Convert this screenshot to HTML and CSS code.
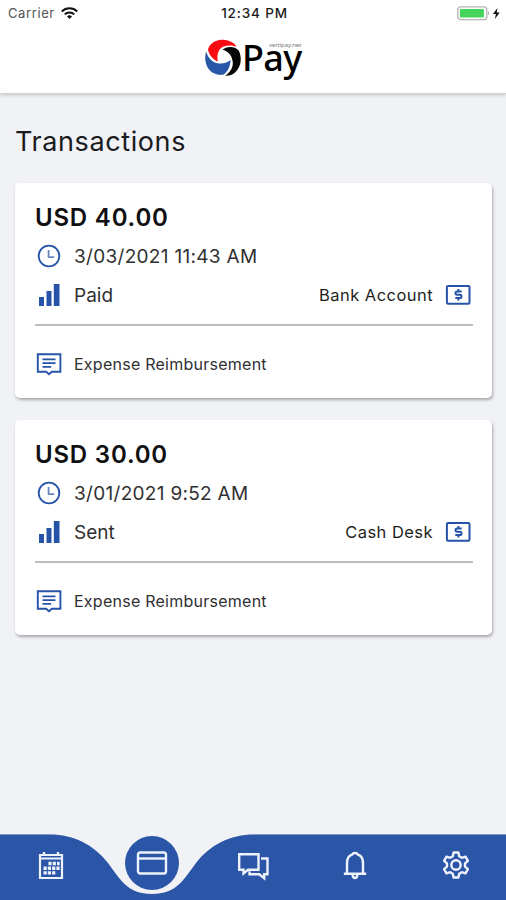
FILE: index.html
```html
<!DOCTYPE html>
<html lang="en">
<head>
<meta charset="utf-8">
<title>Pay – Transactions</title>
<link rel="stylesheet" href="styles.css">
</head>
<body>
<svg class="defs" width="0" height="0" aria-hidden="true">
  <symbol id="clock" viewBox="0 0 26 24"><g fill="none" stroke="currentColor"><circle cx="13" cy="12" r="10.3" stroke-width="1.8"/><path d="M12.6 6v7.2h5.6" stroke-width="1.8" opacity=".7"/></g></symbol>
  <symbol id="bars" viewBox="0 0 26 24"><path fill="currentColor" d="M3 14h5v9H3zM10.5 8h5v15h-5zM17.8 1H23.500v22h-5.700z"/></symbol>
  <symbol id="note" viewBox="0 0 26 24"><g fill="none" stroke="currentColor"><path d="M1.800 2.300h22.600v17.500h-8.600L13 22.200l-2.800-2.400H1.800z" stroke-width="1.900"/><path d="M6.500 7.400h13M6.500 11.100h13M6.500 14.800h8.600" stroke-width="1.700"/></g></symbol>
  <symbol id="cash" viewBox="0 0 26 22"><rect x="1.900" y="1.900" width="22.600" height="17.800" rx="1.200" fill="none" stroke="currentColor" stroke-width="2"/><path d="M16.700 7.500h-4.600q-1.600 0-1.600 1.600t1.600 1.600h2.800q1.600 0 1.600 1.700t-1.600 1.700h-4.600M13.400 5v2.300M13.400 14.200v2.200" fill="none" stroke="currentColor" stroke-width="2"/></symbol>
</svg>
<div class="screen">
  <header class="top">
    <div class="status">
      <div class="carrier"><span>Carrier</span>
        <svg width="17" height="12" viewBox="0 0 17 12"><g fill="none" stroke="#111" stroke-width="2"><path d="M.8 4.500a11 11 0 0 1 15.400 0"/><path d="M3.700 7.400a6.900 6.900 0 0 1 9.600 0"/></g><path d="M8.500 12L6 9.400a3.700 3.700 0 0 1 5 0z" fill="#111"/></svg>
      </div>
      <span class="time">12:34 PM</span>
      <svg class="battery" width="44" height="15" viewBox="0 0 44 15"><rect x=".8" y=".9" width="29" height="12.800" rx="3" fill="#fff" stroke="#b4b4b4" stroke-width="1.300"/><rect x="2.900" y="3" width="24" height="8.600" rx="1" fill="#46d55c"/><path d="M31 5q2 2.200 0 4.600z" fill="#aaa"/><path d="M40.500 2l-4.600 6h3l-1 5 4.800-6.400h-3z" fill="#111"/></svg>
    </div>
    <div class="brand">
      <svg width="38" height="40" viewBox="0 0 38 40">
        <path fill="#fa0b12" d="M4 11.500C6 4 14 .6 21 2c5 .7 9.500 3 11.500 6.500C29 7.300 24 6.800 19.500 8.500 14.500 11 12.500 16 13.800 23.500 9 21.500 5 17 4 11.500z"/>
        <path fill="#2857a7" d="M2.200 13.500C4 20.500 9 25.300 15.500 25.500c4 .2 8-.8 11-3.500C26.500 28 24 33 20 36.500 12 38 5 34 2.500 27 .8 22 .8 18 2.200 13.500z"/>
        <path fill="#050505" d="M18.500 11.500C24 8 30.500 8.200 34.700 12.500 38 19 37.500 28 32 33.500c-3 3.200-6.500 4.500-10.800 4.200C28 33 30 27 28.200 21.500 27.300 17 24 13.300 18.500 11.500z"/>
      </svg>
      <div class="word"><span class="pay">Pay</span><span class="site">vertipay.net</span></div>
    </div>
  </header>
  <main class="content">
    <h1>Transactions</h1>
    <article class="card">
      <h2>USD 40.00</h2>
      <div class="row date"><svg class="ico"><use href="#clock"/></svg><span>3/03/2021 11:43 AM</span></div>
      <div class="row state"><svg class="ico"><use href="#bars"/></svg><span class="label">Paid</span><span class="method">Bank Account</span><svg class="cash"><use href="#cash"/></svg></div>
      <div class="row memo"><svg class="ico"><use href="#note"/></svg><span>Expense Reimbursement</span></div>
    </article>
    <article class="card">
      <h2>USD 30.00</h2>
      <div class="row date"><svg class="ico"><use href="#clock"/></svg><span>3/01/2021 9:52 AM</span></div>
      <div class="row state"><svg class="ico"><use href="#bars"/></svg><span class="label">Sent</span><span class="method">Cash Desk</span><svg class="cash"><use href="#cash"/></svg></div>
      <div class="row memo"><svg class="ico"><use href="#note"/></svg><span>Expense Reimbursement</span></div>
    </article>
  </main>
  <nav class="tabs">
    <svg class="curve" width="506" height="67" viewBox="0 0 506 67"><path d="M0 1.500H50C74 1.500 94 12 108 30 120 46 127 61 152 61S184 46 196 30C210 12 230 1.500 254 1.500H506V67H0z" fill="#2b56a7"/><path d="M0 1.500H50M254 1.500H506" stroke="#7f99c9"/></svg>
    <a class="tab"><svg width="28" height="30" viewBox="0 0 28 30"><g fill="none" stroke="#edf2fb"><path d="M3 4h22v23H3z" stroke-width="2.200"/><path d="M7 1v4M21 1v4" stroke-width="2.400"/><path d="M3 7.500h22" stroke-width="2"/><path d="M11.400 12.500h11.200M6.500 17.200h16.100M6.500 21.900h11.800" stroke-width="3.400" stroke-dasharray="3.200 1.100"/></g></svg></a>
    <a class="tab active"><span class="bubble"><svg width="32" height="26" viewBox="0 0 32 26"><rect x="2" y="2.500" width="28" height="21" rx="2.300" fill="none" stroke="#edf2fb" stroke-width="2.400"/><path d="M3 8.500h26" stroke="#edf2fb" stroke-width="2.400"/></svg></span></a>
    <a class="tab"><svg width="34" height="30" viewBox="0 0 34 30"><g fill="none" stroke="#edf2fb" stroke-width="2.400"><path d="M3.200 3.200h19.300v15.600H12L7.500 22.500v-3.700H3.200z"/><path d="M25 7.500h6.500v15.700h-3.300v4l-5-4H13.500v-3"/></g></svg></a>
    <a class="tab"><svg width="26" height="30" viewBox="0 0 26 30"><g fill="none" stroke="#edf2fb" stroke-width="2.400"><path d="M5 22.500V12q0-6.500 5-8.300Q11 2 13 2t3 1.700q5 1.800 5 8.300v10.500M1.800 22.700h22.400"/><path d="M10.700 23.500q0 3.500 2.300 3.500t2.300-3.500"/></g></svg></a>
    <a class="tab"><svg width="30" height="30" viewBox="0 0 30 30"><g fill="none" stroke="#edf2fb" stroke-width="2.400" stroke-linejoin="round"><path d="M12.600 1.500h4.800l.8 3.800 2.600 1.500 3.700-1.200 2.400 4.200-2.900 2.600v3.200l2.900 2.600-2.400 4.200-3.700-1.200-2.600 1.500-.8 3.800h-4.800l-.8-3.800-2.600-1.500-3.700 1.200-2.400-4.200L6 15.600v-3.200L3.100 9.800l2.400-4.200 3.700 1.200 2.600-1.500z"/><circle cx="15" cy="14" r="4.700"/></g></svg></a>
  </nav>
</div>
</body>
</html>
```
FILE: styles.css
```css
* { box-sizing: border-box; }
body { margin: 0; font-family: Inter, "Liberation Sans", sans-serif; color: #1b1b1d; }
.defs { display: none; }
svg { display: block; flex: none; }
.screen { width: 506px; height: 900px; display: flex; flex-direction: column; background: #f0f2f6; overflow: hidden; }
.top { height: 94px; background: #fff; border-bottom: 1px solid #d0d2d4; box-shadow: 0 1px 4px rgba(0,0,0,.2); }
.status { height: 26px; padding: 0 5px 0 8px; display: grid; grid-template-columns: 1fr auto 1fr; align-items: center; }
.carrier { display: flex; align-items: center; gap: 6px; font-size: 13px; letter-spacing: .6px; color: #555; }
.time { font-size: 13.500px; font-weight: 500; letter-spacing: .85px; }
.battery { justify-self: end; }
.brand { display: flex; margin: 12px 0 0 204px; }
.word { position: relative; height: 40px; }
.pay { display: block; font: 500 36px/40px "Noto Sans", sans-serif; letter-spacing: -.6px; color: #000; }
.site { position: absolute; left: 27px; top: 3px; font: 6px/8px "Noto Sans", sans-serif; letter-spacing: -.1px; color: #777; }
.content { flex: 1; padding: 30px 14px 0 15px; }
h1 { margin: 0 0 24px; font-size: 27px; line-height: 35px; font-weight: 400; letter-spacing: .6px; }
.card { height: 215px; margin-bottom: 22px; padding: 20px 19px 0 20px; background: #fff; border-radius: 5px; box-shadow: 1px 2px 3px rgba(0,0,0,.3); }
h2 { margin: 0; font-size: 24px; line-height: 30px; font-weight: 600; letter-spacing: .8px; color: #101012; }
.row { display: flex; align-items: center; }
.ico { width: 26px; height: 24px; margin: 0 12px 0 1px; color: #2653a8; }
.date, .state { height: 39px; font-size: 19px; color: #303032; }
.date { margin-top: 3px; letter-spacing: .3px; }
.date span, .label { padding-top: 2px; }
.state { padding-right: 2px; }
.method { margin-left: auto; font-size: 16.500px; letter-spacing: .45px; color: #1e1e20; }
.cash { width: 26px; height: 22px; margin-left: 12px; color: #2653a8; }
.memo { height: 78px; margin-top: 10px; padding-bottom: 1px; border-top: 2px solid #bcbcbe; font-size: 16px; letter-spacing: .25px; color: #303032; }
.tabs { position: relative; height: 67px; display: grid; grid-template-columns: repeat(5, 101.200px); }
.curve { position: absolute; left: 0; top: 0; }
.tab { position: relative; display: flex; justify-content: center; padding: 18px 0 0 1px; }
.active { padding-top: 3px; }
.bubble { width: 54px; height: 54px; border-radius: 50%; background: #2b56a7; display: flex; align-items: center; justify-content: center; }
```
